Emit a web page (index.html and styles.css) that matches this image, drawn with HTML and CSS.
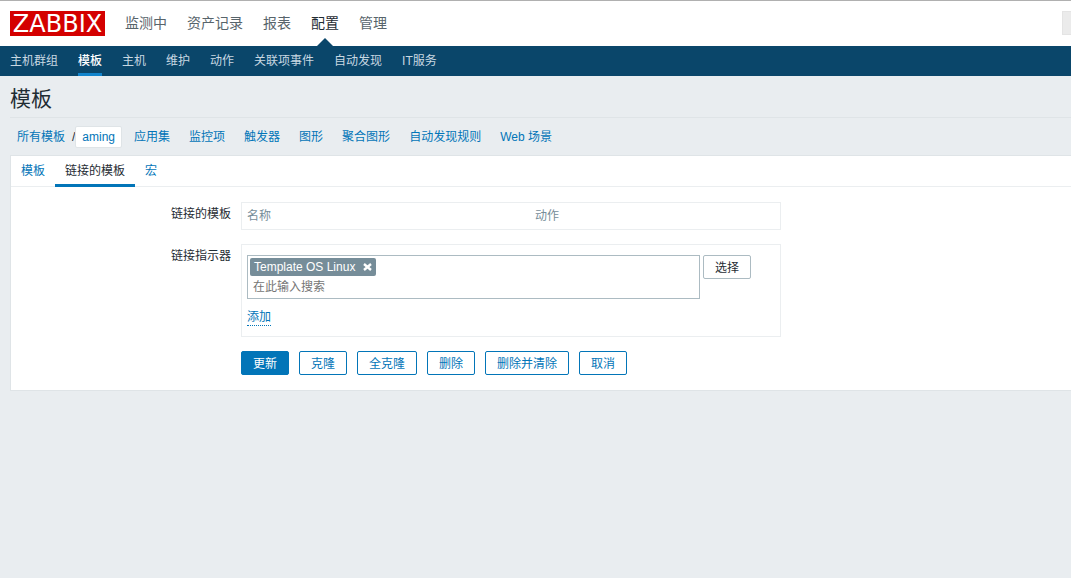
FILE: index.html
```html
<!DOCTYPE html>
<html lang="zh-CN">
<head>
<meta charset="utf-8">
<title>模板</title>
<link rel="stylesheet" href="styles.css">
</head>
<body>
<header class="header">
  <a class="logo" href="#">ZABBIX</a>
  <nav class="main-nav">
    <a href="#">监测中</a>
    <a href="#">资产记录</a>
    <a href="#">报表</a>
    <a class="selected" href="#">配置</a>
    <a href="#">管理</a>
  </nav>
  <input class="search" type="text" aria-label="搜索">
</header>
<nav class="sub-nav">
  <a href="#">主机群组</a>
  <a class="selected" href="#">模板</a>
  <a href="#">主机</a>
  <a href="#">维护</a>
  <a href="#">动作</a>
  <a href="#">关联项事件</a>
  <a href="#">自动发现</a>
  <a href="#">IT服务</a>
</nav>
<main class="content">
  <h1 class="title">模板</h1>
  <nav class="object-nav">
    <a href="#">所有模板</a>
    <span class="slash">/</span>
    <a class="current" href="#">aming</a>
    <div class="object-links">
      <a href="#">应用集</a>
      <a href="#">监控项</a>
      <a href="#">触发器</a>
      <a href="#">图形</a>
      <a href="#">聚合图形</a>
      <a href="#">自动发现规则</a>
      <a href="#">Web 场景</a>
    </div>
  </nav>
  <form class="panel">
    <nav class="tabs">
      <a href="#">模板</a>
      <a class="active" href="#">链接的模板</a>
      <a href="#">宏</a>
    </nav>
    <div class="form">
      <span class="label" id="linked">链接的模板</span>
      <table class="box linked-table" aria-labelledby="linked">
        <thead><tr><th>名称</th><th>动作</th></tr></thead>
      </table>
      <label class="label" for="template-search">链接指示器</label>
      <div class="box indicator">
        <div class="picker">
          <div class="multiselect">
            <span class="chip">Template OS Linux
              <button class="remove" type="button" aria-label="移除"><svg width="9" height="8" viewBox="0 0 9 8"><path d="M1 1l7 6M8 1L1 7" stroke="currentColor" stroke-width="2.4" fill="none"/></svg></button>
            </span>
            <input id="template-search" type="text" placeholder="在此输入搜索">
          </div>
          <button class="btn btn-grey" type="button">选择</button>
        </div>
        <button class="add" type="button">添加</button>
      </div>
      <div class="actions">
        <button class="btn btn-primary" type="button">更新</button>
        <button class="btn" type="button">克隆</button>
        <button class="btn" type="button">全克隆</button>
        <button class="btn" type="button">删除</button>
        <button class="btn" type="button">删除并清除</button>
        <button class="btn" type="button">取消</button>
      </div>
    </div>
  </form>
</main>
</body>
</html>
```
FILE: styles.css
```css
* {
  box-sizing: border-box;
}

body {
  margin: 0;
  border-top: 1px solid #b0b0b0;
  background: #e9edf0;
  color: #1f2c33;
  font: 12px/18px "Liberation Sans", "Noto Sans CJK SC", sans-serif;
}

a {
  color: #0275b8;
  text-decoration: none;
}

button,
input {
  font: inherit;
}

.header {
  display: flex;
  align-items: flex-start;
  height: 45px;
  padding-left: 10px;
  background: #fff;
}

.logo {
  width: 95px;
  height: 25px;
  margin-top: 10px;
  background: #d40000;
  color: #fff;
  font: 24px/26px "DejaVu Sans", sans-serif;
  text-align: center;
}

.main-nav {
  display: flex;
  align-self: stretch;
  gap: 20px;
  margin-left: 20px;
  font-size: 14px;
  line-height: 44px;
}

.main-nav a {
  position: relative;
  color: #57646b;
}

.main-nav .selected {
  color: #1f2c33;
}

.main-nav .selected::after {
  content: "";
  position: absolute;
  bottom: 0;
  left: 50%;
  margin-left: -8px;
  border: 8px solid transparent;
  border-top: 0;
  border-bottom-color: #0a466a;
}

.search {
  width: 9px;
  height: 24px;
  margin: 10px 0 0 auto;
  padding: 0;
  border: 1px solid #e4e4e4;
  border-right: 0;
  background: #ebebeb;
}

.sub-nav {
  display: flex;
  gap: 20px;
  height: 30px;
  padding: 0 10px;
  background: #0a466a;
  line-height: 30px;
}

.sub-nav a {
  height: 30px;
  color: #c8d8e2;
}

.sub-nav .selected {
  border-bottom: 3px solid #1184cc;
  color: #fff;
  font-weight: 500;
}

.content {
  padding-left: 10px;
}

.title {
  height: 42px;
  margin: 0;
  border-bottom: 1px solid #dfe4e7;
  font-size: 21px;
  font-weight: 400;
  line-height: 46px;
}

.object-nav {
  display: flex;
  align-items: center;
  height: 37px;
  padding-left: 7px;
}

.slash {
  margin-left: 7px;
}

.current {
  padding: 1px 6px;
  border: 1px solid #dfe4e7;
  border-radius: 2px;
  background: #fff;
}

.object-links {
  display: flex;
  gap: 19px;
  margin-left: 12px;
}

.panel {
  border: 1px solid #dfe4e7;
  border-right: 0;
  background: #fff;
}

.tabs {
  display: flex;
  height: 31px;
  border-bottom: 1px solid #ebeef0;
  line-height: 30px;
}

.tabs a {
  height: 31px;
  padding: 0 10px;
}

.tabs .active {
  border-bottom: 3px solid #0275b8;
  color: #1f2c33;
}

.form {
  display: grid;
  grid-template-columns: 220px minmax(0, 540px);
  column-gap: 10px;
  row-gap: 14px;
  padding: 15px 0;
}

.label {
  padding-top: 3px;
  text-align: right;
}

.box {
  width: 100%;
  border: 1px solid #ebeef0;
}

.linked-table {
  height: 28px;
  border-spacing: 0;
  table-layout: fixed;
}

.linked-table th {
  padding: 0 5px;
  color: #768d99;
  font-weight: 400;
  text-align: left;
}

.linked-table th:first-child {
  width: 288px;
}

.indicator {
  padding: 10px 5px;
}

.picker {
  display: flex;
  align-items: flex-start;
  gap: 3px;
}

.multiselect {
  width: 453px;
  height: 44px;
  padding: 2px;
  border: 1px solid #acbbc2;
}

.chip {
  display: flex;
  align-items: center;
  gap: 8px;
  width: max-content;
  height: 18px;
  padding: 0 4px;
  border-radius: 2px;
  background: #768d99;
  color: #fff;
}

.remove {
  display: flex;
  padding: 0;
  border: 0;
  background: none;
  color: inherit;
}

.multiselect input {
  display: block;
  width: 100%;
  height: 20px;
  padding: 2px 3px 0;
  border: 0;
  outline: 0;
}

.multiselect input::placeholder {
  color: #757575;
}

.add {
  display: block;
  height: 17px;
  margin-top: 10px;
  padding: 0;
  border: 0;
  border-bottom: 1px dotted #0275b8;
  background: none;
  color: #0275b8;
  line-height: 16px;
}

.actions {
  display: flex;
  grid-column: 2;
  gap: 10px;
}

.btn {
  height: 24px;
  padding: 2px 11px 0;
  border: 1px solid #0275b8;
  border-radius: 2px;
  background: #fff;
  color: #0275b8;
  line-height: 20px;
  white-space: nowrap;
}

.btn-grey {
  border-color: #acbbc2;
  color: #1f2c33;
}

.btn-primary {
  background: #0275b8;
  color: #fff;
}
```
